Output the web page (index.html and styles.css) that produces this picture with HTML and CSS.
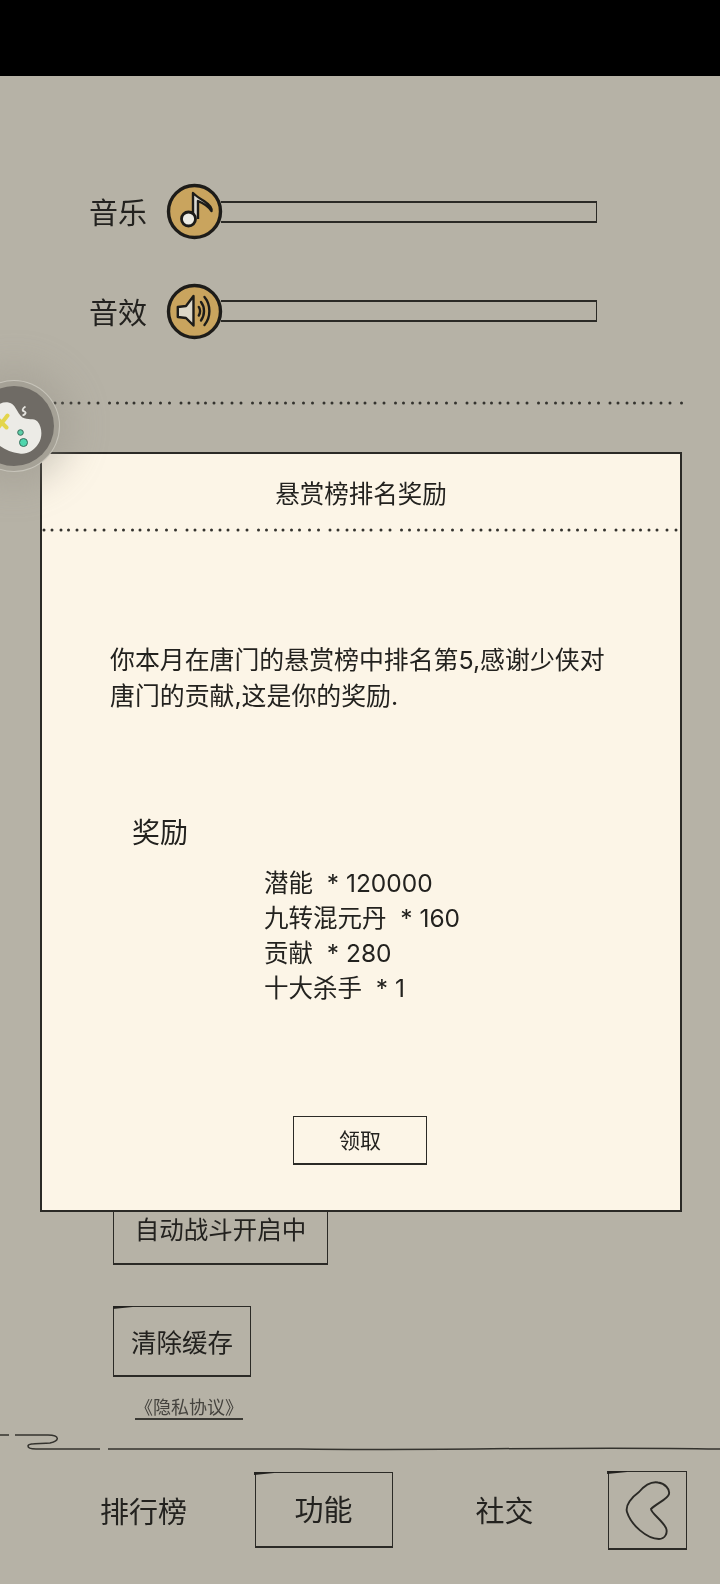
FILE: index.html
```html
<!DOCTYPE html>
<html lang="zh-CN">
<head>
<meta charset="utf-8">
<title>设置</title>
<link rel="stylesheet" href="styles.css">
</head>
<body>
<div class="screen">
  <div class="status-bar"></div>
  <main class="settings">
    <div class="slider-row">
      <span class="slider-label">音乐</span>
      <span class="knob">
        <svg viewBox="0 0 57 57" width="57" height="57"><circle cx="28.500" cy="28.500" r="26" fill="#c9a45e" stroke="#1d1c19" stroke-width="3.400"/><path d="M27 36V10C30 13 33 15 38 18C44 22 46 25 45.500 28C42 23 37 20 32 18V36" fill="#d8d6cf" stroke="#1d1c19" stroke-width="2.400" stroke-linejoin="round"/><circle cx="22.500" cy="36" r="7" fill="#ecebe4" stroke="#1d1c19" stroke-width="2.800"/></svg>
      </span>
      <span class="track"></span>
    </div>
    <div class="slider-row">
      <span class="slider-label">音效</span>
      <span class="knob">
        <svg viewBox="0 0 57 57" width="57" height="57"><circle cx="28.500" cy="28.500" r="26" fill="#c9a45e" stroke="#1d1c19" stroke-width="3.400"/><path d="M11.800 24L20 23L27.500 13V42.500L20 35L11.800 34Z" fill="#dcd7c8" stroke="#1d1c19" stroke-width="2.400" stroke-linejoin="round"/><path d="M32.800 24C34.500 26 34.500 30 32.800 32.500M35 19C39 24 39 32 35 37.500M38.500 14C45 22 45 34 38.500 42" fill="none" stroke="#1d1c19" stroke-width="2.400" stroke-linecap="round"/></svg>
      </span>
      <span class="track"></span>
    </div>
    <svg class="dots dots-page" width="650" height="4"><line x1="2" y1="2" x2="650" y2="2"/></svg>
    <div class="actions">
      <button class="sketch-btn auto-btn">自动战斗开启中</button>
      <button class="sketch-btn clear-btn accent">清除缓存</button>
      <a class="privacy">《隐私协议》</a>
    </div>
  </main>
  <svg class="divider" viewBox="0 0 720 20" width="720" height="20"><path d="M0 2H9M15 2H48C60 2 60 8 50 10C40 11 28 10 28 13C28 15 32 16 36 16H100M108 16H300C450 18 560 13 720 16" fill="none" stroke="#34332e" stroke-width="1.500"/></svg>
  <nav class="tabs">
    <a class="tab">排行榜</a>
    <a class="tab tab-active accent">功能</a>
    <a class="tab tab-social">社交</a>
    <a class="tab-back accent">
      <svg viewBox="0 0 79 78" width="79" height="78"><path d="M30 19C36 12 43 8.500 49 9.500C56 10.500 61 16 60 21C59 26 48 30 42 36C42 40 53 47 57 55C59 60 56 66 50 66C38 66 22 52 18 39C16 32 23 24 30 19Z" fill="none" stroke="#2b2a26" stroke-width="1.900"/></svg>
    </a>
  </nav>

  <section class="reward-dialog">
    <h2 class="dialog-title">悬赏榜排名奖励</h2>
    <svg class="dots dots-dialog" width="638" height="4"><line x1="2" y1="2" x2="638" y2="2"/></svg>
    <p class="dialog-text">你本月在唐门的悬赏榜中排名第5,感谢少侠对<br>唐门的贡献,这是你的奖励.</p>
    <h3 class="reward-heading">奖励</h3>
    <ul class="reward-list">
      <li>潜能&nbsp;&nbsp;* 120000</li>
      <li>九转混元丹&nbsp;&nbsp;* 160</li>
      <li>贡献&nbsp;&nbsp;* 280</li>
      <li>十大杀手&nbsp;&nbsp;* 1</li>
    </ul>
    <button class="sketch-btn claim-btn">领取</button>
  </section>

  <div class="float-ball">
    <svg viewBox="0 0 80 80" width="80" height="80"><g transform="translate(26.500,-385.500)"><path d="M-10 410C-4 404 2 401 8 402C15 403 16 412 22 417C27 420 33 417 37 421C42 427 42 437 38 443C33 451 26 454 19 453C10 452 3 448 -4 443L-10 440Z" fill="#ecebe6"/><path d="M-3 418L6 427M7 415L-3 428" fill="none" stroke="#e3d54c" stroke-width="4" stroke-linecap="round"/><path d="M25 406C22 408 21 410 24 411C26 412 25 414 22 415" fill="none" stroke="#e5e4df" stroke-width="1.800"/><circle cx="20" cy="432" r="2.800" fill="#5ccfa8" stroke="#3a6b5a" stroke-width="1"/><circle cx="23" cy="442" r="4" fill="#4fd6ad" stroke="#3a6b5a" stroke-width="1"/></g></svg>
  </div>
</div>
</body>
</html>
```
FILE: styles.css
```css
* { box-sizing: border-box; }
html, body { margin: 0; padding: 0; }
body { width: 720px; height: 1584px; overflow: hidden; background: #b6b2a6; }
.screen {
  position: relative;
  width: 720px;
  height: 1584px;
  overflow: hidden;
  display: flex;
  flex-direction: column;
  background: #b6b2a6;
  color: #23221f;
  font-family: "Inter", "Noto Sans CJK SC", "Noto Sans", sans-serif;
  filter: blur(0.35px);
}
.status-bar { height: 76px; flex: none; background: #000; }

.settings { flex: none; height: 1357px; display: flex; flex-direction: column; }
.slider-row { display: flex; align-items: center; height: 57px; padding-left: 89px; margin-top: 42.500px; }
.slider-row:first-child { margin-top: 107px; }
.slider-label { width: 77px; padding-top: 4px; font-size: 29px; line-height: 57px; }
.knob { width: 57px; height: 57px; flex: none; position: relative; z-index: 1; }
.knob svg { display: block; }
.track {
  width: 376px;
  height: 22px;
  margin-left: -2px;
  border: 2px solid #2b2a26;
  border-left: 0;
  border-right-width: 1.500px;
}

.dots line { stroke: #34332e; stroke-width: 3; stroke-linecap: round; stroke-dasharray: 0 8 0 9 0 7.500 0 8.500 0 8 0 10 0 9 0 11.500; }
.dots { display: block; flex: none; }
.dots-page { margin: 61.500px 0 0 36px; }

.actions { display: flex; flex-direction: column; align-items: flex-start; padding-left: 113px; margin-top: 780px; }
.sketch-btn {
  display: block;
  background: transparent;
  border: 1.500px solid #2b2a26;
  border-bottom-width: 2.500px;
  color: inherit;
  font-family: inherit;
  padding: 0;
}
.accent { position: relative; }
.accent::before {
  content: "";
  position: absolute;
  left: -1.500px;
  top: -1.500px;
  width: 20px;
  height: 3.500px;
  background: #23221f;
  clip-path: polygon(0 0, 100% 0, 100% 45%, 0 100%);
}
.auto-btn { width: 215px; height: 80px; padding-top: 10px; font-size: 24.500px; line-height: 40px; }
.clear-btn { width: 138px; height: 71px; margin-top: 41px; padding-top: 4px; font-size: 25.500px; line-height: 36px; }
.privacy {
  width: 108px;
  margin: 21px 0 0 22px;
  font-size: 18px;
  line-height: 20px;
  color: #45433e;
  border-bottom: 2px solid #3a3934;
  text-align: center;
}

.divider { display: block; flex: none; }
.tabs { flex: none; display: flex; align-items: flex-start; padding: 17px 0 0 100px; }
.tab { font-size: 29px; line-height: 80px; margin-top: 3px; }
.tab-active {
  width: 138px;
  height: 76px;
  margin: 2px 0 0 67.500px;
  border: 1.500px solid #2b2a26;
  border-bottom-width: 2.500px;
  text-align: center;
  line-height: 76px;
}
.tab-social { margin-left: 83px; line-height: 78px; }
.tab-back {
  width: 79px;
  height: 79px;
  margin: 1px 0 0 74px;
  border: 1.500px solid #2b2a26;
  border-bottom-width: 2.500px;
  position: relative;
}
.tab-back svg { position: absolute; left: 0.500px; top: 0.500px; }

.reward-dialog {
  position: absolute;
  left: 40px;
  top: 452px;
  width: 642px;
  height: 760px;
  background: #fcf5e7;
  border: 2px solid #2b2a26;
  border-bottom-width: 2.500px;
  display: flex;
  flex-direction: column;
}
.dialog-title { margin: 0; height: 72px; font-size: 24.500px; font-weight: 400; line-height: 80px; text-align: center; }
.dots-dialog { margin: 2px 0 0 0; }
.dialog-text { margin: 109.500px 0 0 68px; font-size: 24.900px; line-height: 36.500px; }
.reward-heading { margin: 98px 0 0 90px; font-size: 28px; font-weight: 400; line-height: 40px; }
.reward-list { list-style: none; margin: 13px 0 0 222px; padding: 0; font-size: 24.500px; line-height: 35px; }
.claim-btn { width: 134px; height: 49px; margin: 110px 0 0 251px; padding-top: 3px; font-size: 21px; line-height: 40px; }

.float-ball {
  position: absolute;
  left: -26.500px;
  top: 385.500px;
  width: 80px;
  height: 80px;
  border-radius: 50%;
  background: #6f6b65;
  box-shadow: 0 0 0 5px #a5a196, 0 0 0 6px #c8c5bb, 0 0 36px 18px rgba(150, 146, 135, 0.4);
}
.float-ball svg { display: block; overflow: hidden; border-radius: 50%; }
```
